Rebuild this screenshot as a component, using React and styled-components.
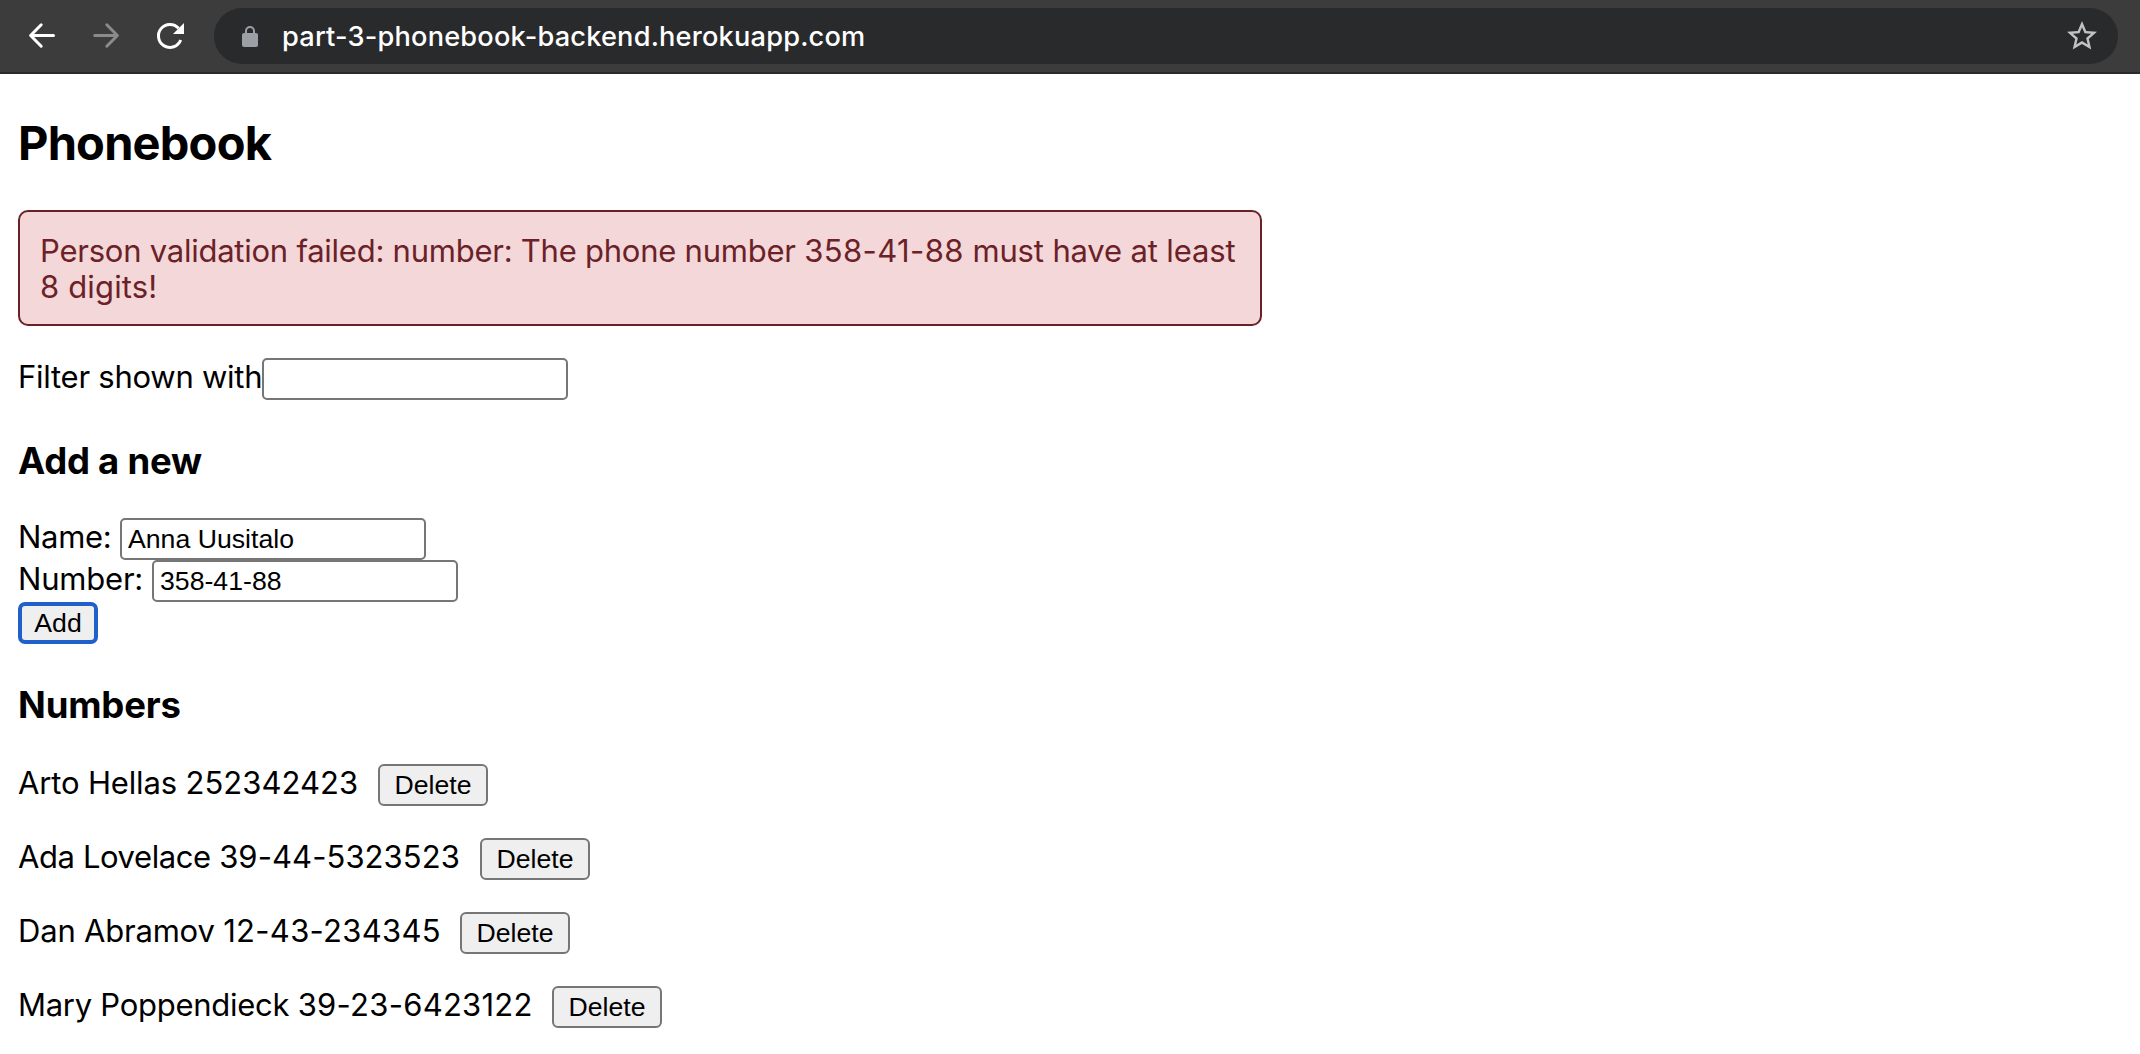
import React from 'react';
import styled, { createGlobalStyle } from 'styled-components';

const GlobalStyle = createGlobalStyle`
  html, body { margin: 0; background: #fff; }
  body {
    overflow: hidden;
    color: #000;
    font-family: Inter, 'Liberation Sans', sans-serif;
    font-size: 31px;
  }
`;

const Toolbar = styled.header`
  box-sizing: border-box;
  display: flex;
  align-items: center;
  height: 74px;
  padding: 0 22px 0 26px;
  background: #3c3c3c;
  border-bottom: 2px solid #292a2d;
`;

const NavButtons = styled.nav`
  display: flex;
  gap: 32px;
  margin-right: 28px;
`;

const NavIcon = styled.svg`
  display: block;
  width: 32px;
  height: 32px;
  fill: none;
  stroke: ${(p) => (p.$dimmed ? '#8b8b8b' : '#fff')};
  stroke-width: 3;
`;

const AddressBar = styled.div`
  box-sizing: border-box;
  flex: 1;
  display: flex;
  align-items: center;
  height: 56px;
  padding: 0 18px 0 28px;
  border-radius: 28px;
  background: #292a2c;
`;

const LockIcon = styled.svg`
  display: block;
  width: 16px;
  height: 22px;
  margin-right: 24px;
`;

const Url = styled.span`
  flex: 1;
  padding-top: 2px;
  color: #fff;
  font-size: 27.2px;
  font-weight: 500;
  line-height: 36px;
  letter-spacing: 0.19px;
`;

const StarIcon = styled.svg`
  display: block;
  width: 36px;
  height: 36px;
  fill: #c2c2c2;
`;

const Page = styled.main`
  display: flex;
  flex-direction: column;
  padding: 0 18px;
`;

const Title = styled.h1`
  margin: 41px 0 39px;
  font-size: 47px;
  line-height: 56px;
  letter-spacing: -0.8px;
`;

const Alert = styled.div`
  box-sizing: border-box;
  width: 1244px;
  height: 116px;
  padding: 21px 20px 19px;
  border: 2px solid #6b2127;
  border-radius: 10px;
  background: #f3d7d9;
  color: #6b2127;
  line-height: 36px;
`;

const AlertLine = styled.span`
  display: block;
  white-space: nowrap;
  letter-spacing: ${(p) => p.$tracking}px;
`;

const Tracked = styled.span`
  letter-spacing: ${(p) => p.$tracking}px;
`;

const SectionTitle = styled.h2`
  margin: 39px 0 35px;
  font-size: 36.5px;
  line-height: 44px;
  letter-spacing: ${(p) => p.$tracking}px;
`;

const FieldRow = styled.div`
  display: flex;
  height: 42px;
  margin-top: ${(p) => p.$top || 0}px;
`;

const Label = styled.label`
  flex: 0 0 ${(p) => p.$width}px;
  min-width: 0;
  line-height: 37px;
  white-space: nowrap;
  letter-spacing: ${(p) => p.$tracking}px;
`;

const TextInput = styled.input`
  box-sizing: border-box;
  width: 306px;
  height: 42px;
  margin: 0;
  padding: 0 6px;
  border: 2px solid #767676;
  border-radius: 5px;
  outline: none;
  background: #fff;
  color: #000;
  font: 26.67px 'Liberation Sans', Arial, sans-serif;
`;

const Button = styled.button`
  box-sizing: border-box;
  width: ${(p) => (p.$focused ? 80 : 110)}px;
  height: 42px;
  margin: 0;
  padding: 0;
  border: ${(p) => (p.$focused ? '4px solid #1f60cb' : '2px solid #767676')};
  border-radius: ${(p) => (p.$focused ? 7 : 6)}px;
  background: #efefef;
  color: #000;
  font: 26.67px 'Liberation Sans', Arial, sans-serif;
`;

const PersonList = styled.div`
  display: flex;
  flex-direction: column;
  gap: 32px;
  margin-top: 2px;
`;

const PersonRow = styled.div`
  display: flex;
  height: 42px;
`;

const persons = [
  { name: 'Arto Hellas', number: '252342423', width: 360, nameTracking: -0.15, numberTracking: 0.04 },
  { name: 'Ada Lovelace', number: '39-44-5323523', width: 462, nameTracking: -0.4, numberTracking: 0.07 },
  { name: 'Dan Abramov', number: '12-43-234345', width: 442, nameTracking: -0.2, numberTracking: 0.3 },
  { name: 'Mary Poppendieck', number: '39-23-6423122', width: 534, nameTracking: -0.27, numberTracking: 0.26 },
];

export default function App() {
  return (
    <>
      <GlobalStyle />
      <Toolbar>
        <NavButtons>
          <NavIcon viewBox="0 0 32 32" strokeLinecap="round">
            <path d="M27.5 15.5H5M15.2 4.8L4.6 15.5L15.2 26.2" strokeLinejoin="round" />
          </NavIcon>
          <NavIcon $dimmed viewBox="0 0 32 32" strokeLinecap="round">
            <path d="M4.7 15.5H27M16.8 4.8L27.4 15.5L16.8 26.2" strokeLinejoin="round" />
          </NavIcon>
          <NavIcon viewBox="0 0 32 32">
            <path d="M26.7 20A11.5 11.5 0 1 1 24.6 8.3" />
            <path d="M30 3V14H19Z" fill="#fff" stroke="none" />
          </NavIcon>
        </NavButtons>
        <AddressBar>
          <LockIcon viewBox="0 0 16 22">
            <rect y="8" width="16" height="14" rx="2" fill="#9aa0a6" />
            <path d="M4 9V6a4 4 0 0 1 8 0v3" fill="none" stroke="#9aa0a6" strokeWidth="2" />
          </LockIcon>
          <Url>part-3-phonebook-backend.herokuapp.com</Url>
          <StarIcon viewBox="0 0 24 24">
            <path d="M22 9.24l-7.19-.62L12 2 9.19 8.63 2 9.24l5.46 4.73L5.82 21 12 17.27 18.18 21l-1.63-7.03L22 9.24zM12 15.4l-3.76 2.27 1-4.28-3.32-2.88 4.38-.38L12 6.1l1.71 4.04 4.38.38-3.32 2.88 1 4.28L12 15.4z" />
          </StarIcon>
        </AddressBar>
      </Toolbar>
      <Page>
        <Title>Phonebook</Title>
        <Alert>
          <AlertLine $tracking={-0.24}>
            Person validation failed: number: The phone number{' '}
            <Tracked $tracking={0.4}>358-41-88</Tracked>
            <Tracked $tracking={-0.15}> must have at least</Tracked>
          </AlertLine>
          <AlertLine $tracking={0.15}>8 digits!</AlertLine>
        </Alert>
        <FieldRow $top={32}>
          <Label $width={244} $tracking={-0.25}>Filter shown with</Label>
          <TextInput />
        </FieldRow>
        <SectionTitle $tracking={-0.25}>Add a new</SectionTitle>
        <FieldRow>
          <Label $width={102} $tracking={-0.3}>Name:</Label>
          <TextInput defaultValue="Anna Uusitalo" />
        </FieldRow>
        <FieldRow>
          <Label $width={134} $tracking={-0.2}>Number:</Label>
          <TextInput defaultValue="358-41-88" />
        </FieldRow>
        <FieldRow>
          <Button $focused>Add</Button>
        </FieldRow>
        <SectionTitle $tracking={-0.18}>Numbers</SectionTitle>
        <PersonList>
          {persons.map((p) => (
            <PersonRow key={p.name}>
              <Label as="span" $width={p.width} $tracking={p.nameTracking}>
                {p.name} <Tracked $tracking={p.numberTracking}>{p.number}</Tracked>
              </Label>
              <Button>Delete</Button>
            </PersonRow>
          ))}
        </PersonList>
      </Page>
    </>
  );
}
